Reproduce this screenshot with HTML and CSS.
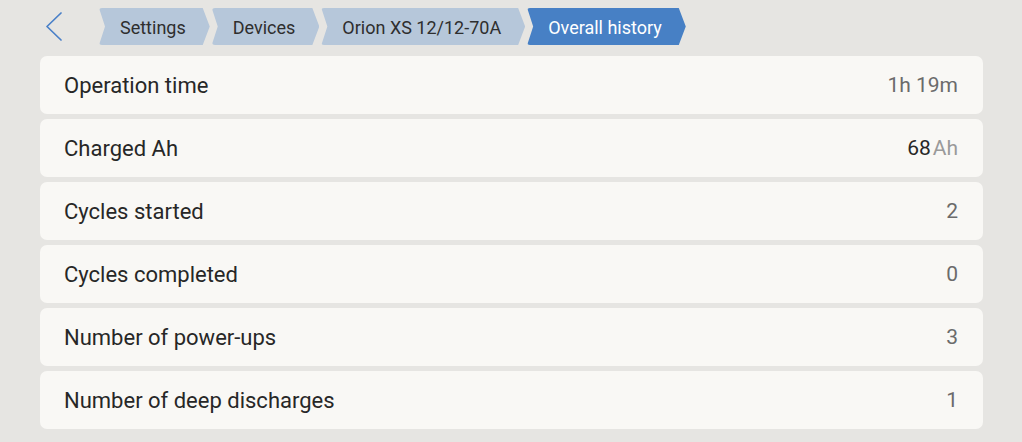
FILE: index.html
```html
<!DOCTYPE html>
<html>
<head>
<meta charset="utf-8">
<link rel="stylesheet" href="styles.css">
</head>
<body>
<div class="top">
  <div class="back">
    <svg width="20" height="30" viewBox="0 0 20 30"><polyline points="15,1 1,14.5 15,28" fill="none" stroke="#4a80c8" stroke-width="1.7" stroke-linecap="round" stroke-linejoin="round"/></svg>
  </div>
  <nav class="crumbs">
    <div class="crumb">Settings</div>
    <div class="crumb">Devices</div>
    <div class="crumb">Orion XS 12/12-70A</div>
    <div class="crumb active">Overall history</div>
  </nav>
</div>
<div class="list">
  <div class="row"><span class="label">Operation time</span><span class="value">1h 19m</span></div>
  <div class="row"><span class="label">Charged Ah</span><span class="value"><span class="num">68</span><span class="unit">Ah</span></span></div>
  <div class="row"><span class="label">Cycles started</span><span class="value">2</span></div>
  <div class="row"><span class="label">Cycles completed</span><span class="value">0</span></div>
  <div class="row"><span class="label">Number of power-ups</span><span class="value">3</span></div>
  <div class="row"><span class="label">Number of deep discharges</span><span class="value">1</span></div>
</div>
</body>
</html>
```
FILE: styles.css
```css
html, body {
  margin: 0;
  padding: 0;
  background: #e6e5e2;
  font-family: Roboto, "Liberation Sans", sans-serif;
}
body {
  padding: 8px 39px 0 40px;
}
.top {
  display: flex;
  align-items: center;
  height: 37px;
}
.back {
  width: 59px;
  display: flex;
  align-items: center;
  padding-left: 6px;
  box-sizing: border-box;
  height: 37px;
}
.back svg { display: block; }
.crumbs {
  display: flex;
  gap: 2px;
}
.crumb {
  height: 37px;
  box-sizing: border-box;
  display: flex;
  align-items: center;
  padding: 2px 24px 0 21px;
  font-size: 18px;
  color: #2e2e2e;
  background: #b6c7da;
  clip-path: polygon(0 0, calc(100% - 7px) 0, 100% 50%, calc(100% - 7px) 100%, 0 100%, 6px 50%);
  border-radius: 3px 0 0 3px;
}
.crumb.active {
  background: #4780c5;
  color: #fff;
}
.list {
  margin-top: 11px;
  display: flex;
  flex-direction: column;
  gap: 5px;
}
.row {
  height: 58px;
  background: #f9f8f5;
  border-radius: 7px;
  display: flex;
  align-items: center;
  justify-content: space-between;
  padding: 0 25px 0 24px;
  font-size: 22px;
}
.label { color: #272727; }
.value { color: #6b6b6b; font-size: 21px; }
.num { color: #272727; }
.unit { color: #9a9a9a; margin-left: 2px; }
```
